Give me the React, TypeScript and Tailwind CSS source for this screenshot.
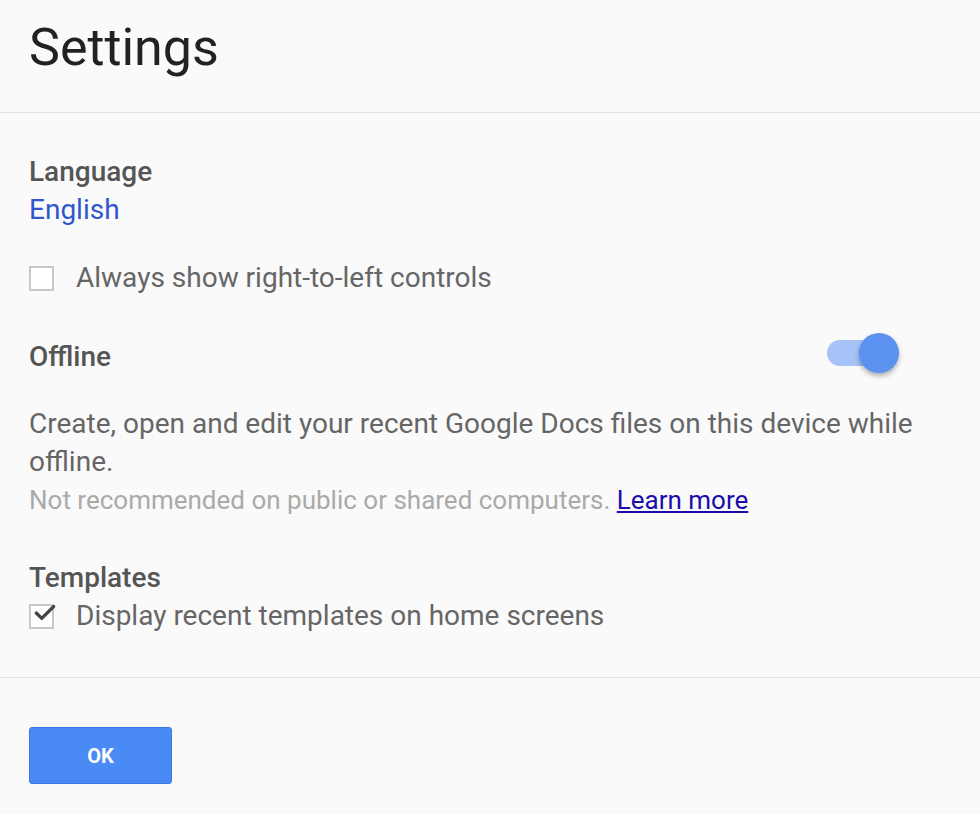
import { Check } from "lucide-react";

const Checkbox = ({ checked }: { checked?: boolean }) => (
  <div className="relative w-[25px] h-[25px] border-2 border-[#c8c8c8] bg-white shrink-0">
    {checked && (
      <Check
        className="absolute -top-[6px] left-[1px] text-[#444]"
        size={26}
        strokeWidth={3}
      />
    )}
  </div>
);

const App = () => {
  return (
    <div
      className="w-[980px] h-[814px] bg-[#fafafa] text-[#666]"
      style={{ fontFamily: "Roboto, 'Liberation Sans', sans-serif" }}
    >
      <header className="h-[113px] border-b border-[#e2e2e2] px-[29px] pt-[16px]">
        <h1 className="text-[52px] leading-[64px] text-[#222]">Settings</h1>
      </header>

      <div className="px-[29px] pt-[40px] pb-[42px] border-b border-[#e2e2e2]">
        <h2 className="text-[28px] leading-[38px] font-medium text-[#555]">
          Language
        </h2>
        <a className="block text-[28px] leading-[38px] text-[#2f57d0]">English</a>

        <label className="flex items-center gap-[22px] mt-[30px]">
          <Checkbox />
          <span className="text-[28px] leading-[38px] text-[#666]">
            Always show right-to-left controls
          </span>
        </label>

        <div className="flex items-center justify-between mt-[41px] pr-[62px]">
          <h2 className="text-[28px] leading-[38px] font-medium text-[#555]">
            Offline
          </h2>
          <div className="relative w-[62px] h-[26px] mb-[8px] rounded-full bg-[#a6c2f6]">
            <div className="absolute -right-[10px] -top-[7px] w-[40px] h-[40px] rounded-full bg-[#5b92ef] shadow-[0_3px_5px_rgba(0,0,0,0.3)]" />
          </div>
        </div>

        <p className="mt-[29px] text-[28px] leading-[38px] text-[#666] pr-[20px]">
          Create, open and edit your recent Google Docs files on this device
          while offline.
        </p>
        <p className="text-[26px] leading-[38px] text-[#aaa]">
          Not recommended on public or shared computers.{" "}
          <a className="text-[#1a0dab] underline">Learn more</a>
        </p>

        <h2 className="mt-[40px] text-[28px] leading-[38px] font-medium text-[#555]">
          Templates
        </h2>
        <label className="flex items-center gap-[22px]">
          <Checkbox checked />
          <span className="text-[28px] leading-[38px] text-[#666]">
            Display recent templates on home screens
          </span>
        </label>
      </div>

      <div className="px-[29px] pt-[49px]">
        <button className="w-[143px] h-[57px] rounded-[3px] bg-[#4a8af4] border border-[#3b78e7] text-white text-[20px] font-bold">
          OK
        </button>
      </div>
    </div>
  );
};

export default App;
